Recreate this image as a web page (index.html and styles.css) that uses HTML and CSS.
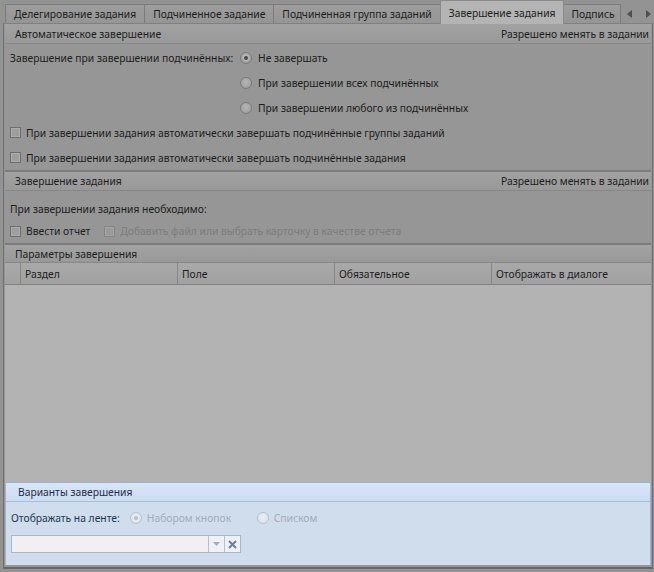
FILE: index.html
```html
<!DOCTYPE html>
<html lang="ru">
<head>
<meta charset="utf-8">
<title>Завершение задания</title>
<link rel="stylesheet" href="styles.css">
</head>
<body>
<div class="tabs">
  <div class="tab">Делегирование задания</div>
  <div class="tab">Подчиненное задание</div>
  <div class="tab">Подчиненная группа заданий</div>
  <div class="tab active">Завершение задания</div>
  <div class="tab last">Подпись</div>
  <div class="tab-nav">
    <svg class="arrow" width="5" height="8" viewBox="0 0 5 8"><path d="M5 0 L0 4 L5 8 Z"/></svg>
    <svg class="arrow" width="5" height="8" viewBox="0 0 5 8"><path d="M0 0 L5 4 L0 8 Z"/></svg>
  </div>
</div>
<div class="panel">
  <section class="group g1">
    <div class="ghead"><span>Автоматическое завершение</span><span>Разрешено менять в задании</span></div>
    <div class="gbody body1">
      <div class="complete-grid">
        <div class="row label">Завершение при завершении подчинённых:</div>
        <div class="row"><span class="radio checked"></span><span>Не завершать</span></div>
        <div class="row"></div>
        <div class="row"><span class="radio"></span><span>При завершении всех подчинённых</span></div>
        <div class="row"></div>
        <div class="row"><span class="radio"></span><span>При завершении любого из подчинённых</span></div>
      </div>
      <div class="row"><span class="check"></span><span>При завершении задания автоматически завершать подчинённые группы заданий</span></div>
      <div class="row"><span class="check"></span><span>При завершении задания автоматически завершать подчинённые задания</span></div>
    </div>
  </section>
  <section class="group g2">
    <div class="ghead"><span>Завершение задания</span><span>Разрешено менять в задании</span></div>
    <div class="gbody body2">
      <div class="row2">При завершении задания необходимо:</div>
      <div class="row2">
        <span class="check"></span><span>Ввести отчет</span>
        <span class="check disabled spaced"></span><span class="muted">Добавить файл или выбрать карточку в качестве отчета</span>
      </div>
    </div>
  </section>
  <section class="group g3">
    <div class="ghead"><span>Параметры завершения</span></div>
    <div class="grid-head">
      <div class="cell ind"></div>
      <div class="cell">Раздел</div>
      <div class="cell">Поле</div>
      <div class="cell">Обязательное</div>
      <div class="cell">Отображать в диалоге</div>
    </div>
    <div class="grid-body"></div>
  </section>
  <section class="blue">
    <div class="bhead">Варианты завершения</div>
    <div class="bbody">
      <div class="brow">
        <span class="blabel">Отображать на ленте:</span>
        <span class="bopt first"><span class="radio dis checked"></span><span>Набором кнопок</span></span>
        <span class="bopt"><span class="radio dis"></span><span>Списком</span></span>
      </div>
      <div class="combo">
        <div class="combo-field"></div>
        <div class="combo-btn">
          <svg width="7" height="4" viewBox="0 0 7 4"><path d="M0 0 H7 L3.5 4 Z" fill="#a3acb8"/></svg>
        </div>
        <div class="combo-btn">
          <svg width="9" height="9" viewBox="0 0 9 9"><path d="M1 1 L8 8 M8 1 L1 8" stroke="#6f7f95" stroke-width="2"/></svg>
        </div>
      </div>
    </div>
  </section>
</div>
</body>
</html>
```
FILE: styles.css
```css
* { box-sizing: border-box; }

body {
  margin: 0;
  width: 654px;
  height: 572px;
  overflow: hidden;
  background: #939393;
  font-family: "Noto Sans", "DejaVu Sans", sans-serif;
  font-size: 10.3px;
  color: #1c1c1c;
}

/* ---------- tabs ---------- */
.tabs {
  display: flex;
  align-items: flex-end;
  height: 23px;
  padding-left: 5px;
}

.tab {
  height: 19px;
  padding: 0 8px;
  display: flex;
  align-items: center;
  white-space: nowrap;
  background: linear-gradient(#9d9d9d, #959595);
  border: 1px solid #7b7b7b;
  border-bottom: none;
  margin-right: -1px;
  flex: none;
}

.tab.active {
  height: 24px;
  margin-bottom: -1px;
  background: #b4b4b4;
  border-color: #8a8a8a;
  position: relative;
  z-index: 2;
}

.tab.last {
  padding: 0 5px 0 7px;
}

.tab-nav {
  margin-left: auto;
  display: flex;
  align-items: center;
  gap: 14px;
  height: 19px;
  padding-right: 3px;
}

.arrow path { fill: #4e4e4e; }

/* ---------- panel ---------- */
.panel {
  margin-left: 3px;
  width: 650px;
  height: 546px;
  border: 1px solid #6f6f6f;
  border-top-color: #808080;
  border-bottom: 2px solid #676767;
  padding: 0 1px 2px 1px;
  display: flex;
  flex-direction: column;
  background: #969696;
}

.group + .group {
  border-top: 2px solid #7c7c7c;
}

.ghead {
  height: 19px;
  display: flex;
  align-items: center;
  justify-content: space-between;
  padding: 0 2px 0 10px;
  background: linear-gradient(#a2a2a2, #999999);
  border-bottom: 1px solid #878787;
  white-space: nowrap;
}

.g1 .ghead { height: 20px; }

.gbody {
  padding-left: 5px;
}

.body1 {
  height: 126px;
  padding-top: 1px;
}

.complete-grid {
  display: grid;
  grid-template-columns: 230px 1fr;
}

.row {
  height: 25px;
  display: flex;
  align-items: center;
  gap: 5px;
  white-space: nowrap;
}

.complete-grid .row { gap: 6px; }

.body2 {
  height: 52px;
  padding-top: 7px;
}

.row2 {
  height: 22px;
  display: flex;
  align-items: center;
  gap: 5px;
  white-space: nowrap;
}

.spaced { margin-left: 9px; }

.muted { color: #7c7c7c; }

/* ---------- radio / check ---------- */
.radio {
  width: 12px;
  height: 12px;
  border-radius: 50%;
  border: 1px solid #7a7a7a;
  background: radial-gradient(circle at 50% 40%, #b4b4b4, #9c9c9c);
  display: inline-flex;
  align-items: center;
  justify-content: center;
  flex: none;
}

.radio.checked::after {
  content: "";
  width: 4px;
  height: 4px;
  border-radius: 50%;
  background: #4a4a4a;
  box-shadow: 0 0 0 1px #b9b9b9;
}

.check {
  width: 11px;
  height: 11px;
  border: 1px solid #6e6e6e;
  background: #9e9e9e;
  box-shadow: inset 0 0 0 1px #acacac;
  flex: none;
}

.check.disabled {
  border-color: #858585;
  background: #9a9a9a;
  box-shadow: inset 0 0 0 1px #a3a3a3;
}

/* ---------- grid ---------- */
.g3 {
  flex: 1;
  display: flex;
  flex-direction: column;
}

.g3 .ghead { height: 18px; }

.grid-head {
  height: 22px;
  display: grid;
  grid-template-columns: 16px 157px 157px 157px 1fr;
  background: linear-gradient(#a9a9a9, #a1a1a1);
  border-bottom: 1px solid #828282;
}

.cell {
  display: flex;
  align-items: center;
  padding-left: 4px;
  border-right: 1px solid #878787;
  white-space: nowrap;
}

.cell:last-child { border-right: none; }

.grid-body {
  flex: 1;
  background: #b3b3b3;
}

/* ---------- blue group ---------- */
.blue {
  height: 83px;
  border: 1px solid #9ab4d3;
  border-bottom: none;
  background: #d0ddec;
  color: #1c3556;
}

.bhead {
  height: 19px;
  display: flex;
  align-items: center;
  padding-left: 12px;
  background: linear-gradient(#d8e6f8, #ccdcf1);
  border-bottom: 1px solid #a6bfdc;
  color: #1e2d45;
}

.bbody {
  padding: 7px 0 0 5px;
}

.brow {
  height: 18px;
  display: flex;
  align-items: center;
  white-space: nowrap;
}

.blabel { margin-right: 10px; }

.bopt {
  display: inline-flex;
  align-items: center;
  gap: 5px;
  color: #a1acbb;
}

.bopt.first { width: 127px; }

.radio.dis {
  border-color: #b5c1d0;
  background: radial-gradient(circle at 50% 40%, #e9eff6, #d6e0ec);
}

.radio.dis.checked::after {
  background: #b3bfcd;
  box-shadow: 0 0 0 1px #e6edf5;
}

.combo {
  margin-top: 8px;
  width: 230px;
  height: 18px;
  display: flex;
  border: 1px solid #a9b7c9;
  background: #f0f0f0;
}

.combo-field { flex: 1; }

.combo-btn {
  width: 16px;
  display: flex;
  align-items: center;
  justify-content: center;
  border-left: 1px solid #b4c0ce;
  background: #eef1f5;
}
```
